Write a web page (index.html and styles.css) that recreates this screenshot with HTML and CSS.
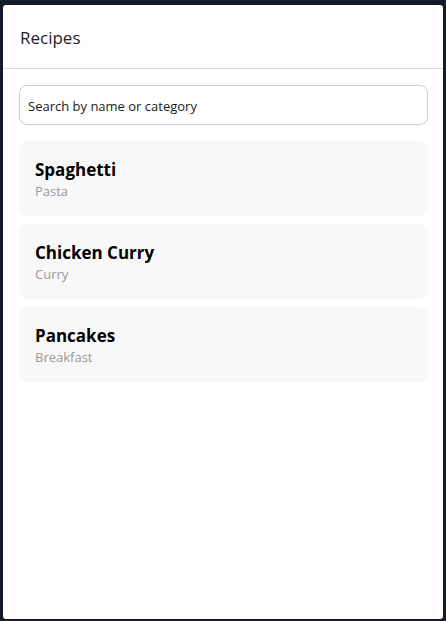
FILE: index.html
```html
<!DOCTYPE html>
<html lang="en">
<head>
<meta charset="utf-8">
<title>Recipes</title>
<link rel="stylesheet" href="styles.css">
</head>
<body>
<div class="panel">
  <header class="header">
    <h1 class="title">Recipes</h1>
  </header>
  <main class="content">
    <input class="search" type="text" placeholder="Search by name or category">
    <ul class="list">
      <li class="card">
        <div class="card-title">Spaghetti</div>
        <div class="card-sub">Pasta</div>
      </li>
      <li class="card">
        <div class="card-title">Chicken Curry</div>
        <div class="card-sub">Curry</div>
      </li>
      <li class="card">
        <div class="card-title">Pancakes</div>
        <div class="card-sub">Breakfast</div>
      </li>
    </ul>
  </main>
</div>
</body>
</html>
```
FILE: styles.css
```css
* { box-sizing: border-box; }
html, body { height: 100%; }
body {
  margin: 0;
  padding: 5px 3px 2px 3px;
  background: #131b2b;
  font-family: "Open Sans", "Noto Sans", sans-serif;
}
.panel {
  height: 100%;
  background: #fff;
  border-radius: 3px;
  display: flex;
  flex-direction: column;
}
.header {
  height: 64px;
  padding: 1px 16px 0;
  border-bottom: 1px solid #dcdcdc;
  display: flex;
  align-items: center;
}
.title {
  margin: 0;
  font-size: 17px;
  font-weight: 500;
  color: #222;
  padding-left: 1px;
}
.content {
  padding: 16px 15px 16px 16px;
  display: flex;
  flex-direction: column;
  gap: 16px;
}
.search {
  height: 40px;
  width: 100%;
  border: 1px solid #cccccc;
  border-radius: 8px;
  padding: 1px 8px 0;
  font-family: inherit;
  font-size: 13px;
  color: #222;
  background: #fff;
  outline: none;
}
.search::placeholder { color: #1a1a1a; opacity: 1; }
.list {
  list-style: none;
  margin: 0;
  padding: 0;
  display: flex;
  flex-direction: column;
  gap: 8px;
}
.card {
  height: 75px;
  background: #f8f8f8;
  border-radius: 8px;
  padding: 17px 16px 0;
  display: flex;
  flex-direction: column;
}
.card-title {
  font-size: 17px;
  font-weight: 700;
  color: #000;
  line-height: 24px;
}
.card-sub {
  font-size: 13px;
  color: #999;
  line-height: 18px;
}
```
